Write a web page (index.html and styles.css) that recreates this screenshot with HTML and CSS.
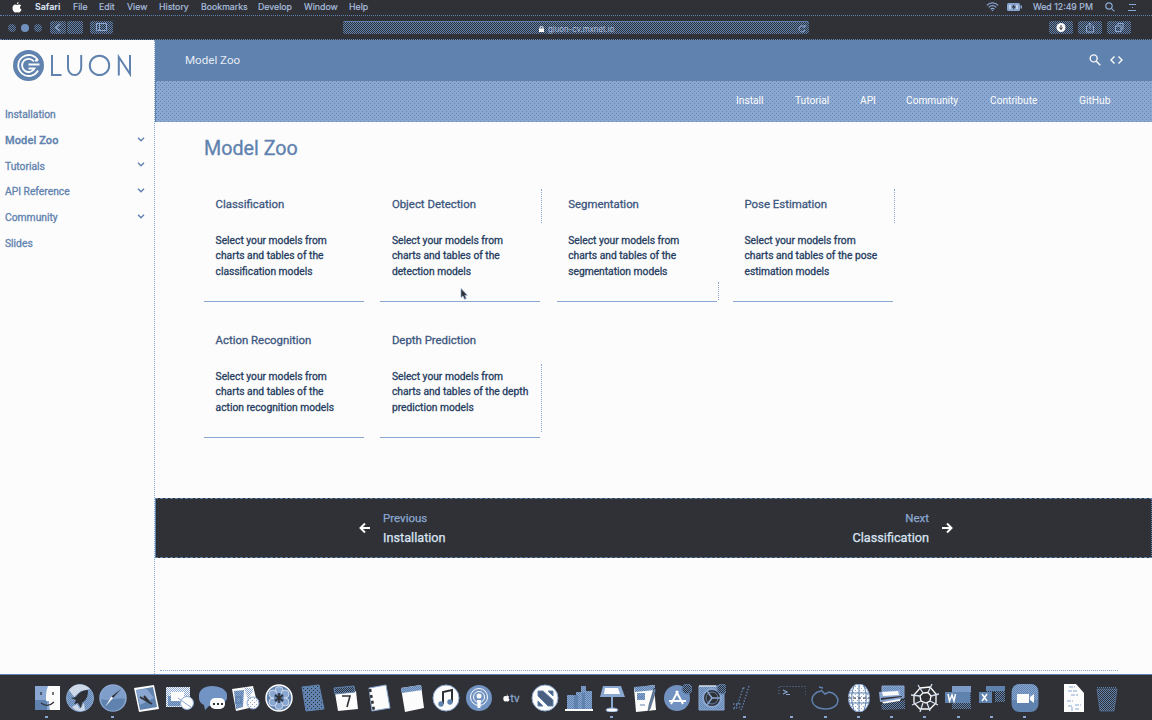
FILE: index.html
```html
<!DOCTYPE html>
<html lang="en">
<head>
<meta charset="utf-8">
<title>Model Zoo</title>
<link rel="stylesheet" href="styles.css">
</head>
<body>
<svg class="defs" width="0" height="0" aria-hidden="true"><defs>
<pattern id="db" width="2" height="2" patternUnits="userSpaceOnUse"><path fill="#303136" d="M0 0h2v2H0z"/><path fill="#5f82ae" d="M0 0h1v1H0zM1 1h1v1H1z"/></pattern>
<pattern id="dk" width="4" height="4" patternUnits="userSpaceOnUse"><path fill="#5f82ae" d="M0 0h4v4H0z"/><path fill="#303136" d="M0 0h1v1H0zM2 2h1v1H2z"/></pattern>
<pattern id="bl" width="2" height="2" patternUnits="userSpaceOnUse"><path fill="#5f82ae" d="M0 0h2v2H0z"/><path fill="#8aa7d1" d="M0 0h1v1H0zM1 1h1v1H1z"/></pattern>
<pattern id="lw" width="2" height="2" patternUnits="userSpaceOnUse"><path fill="#8aa7d1" d="M0 0h2v2H0z"/><path fill="#fcfcfc" d="M0 0h1v1H0zM1 1h1v1H1z"/></pattern>
<pattern id="wl" width="4" height="4" patternUnits="userSpaceOnUse"><path fill="#fcfcfc" d="M0 0h4v4H0z"/><path fill="#8aa7d1" d="M0 0h1v1H0zM2 2h1v1H2z"/></pattern>
</defs></svg>
<div class="desktop">
<header class="menubar">
  <svg class="apple" viewBox="0 0 10 11"><path fill="#fcfcfc" d="M6.600 0C6.700 1.200 5.900 2.200 4.800 2.300 4.700 1.200 5.600.2 6.600 0zM5 3c.8 0 1.300-.5 2.300-.4.8 0 1.400.4 1.800 1-1.700 1.100-1.300 3.300.4 4C9 9.200 8 10.600 7 10.600c-.7 0-1-.4-1.900-.4-.8 0-1.200.4-1.900.4C1.800 10.600.5 8.300.5 6.100c0-2.200 1.300-3.500 2.700-3.500C4 2.600 4.500 3 5 3z"/></svg>
  <nav class="menus"><b>Safari</b><span>File</span><span>Edit</span><span>View</span><span>History</span><span>Bookmarks</span><span>Develop</span><span>Window</span><span>Help</span></nav>
  <div class="status">
    <svg width="13" height="10" viewBox="0 0 13 10" fill="none" stroke="#8aa7d1" stroke-width="1.200"><path d="M.8 3.400C4-.1 9-.1 12.200 3.400M2.700 5.300c2.100-2.200 5.500-2.200 7.600 0M4.600 7.200c1.200-1.100 2.600-1.100 3.800 0"/><path fill="#8aa7d1" stroke="none" d="M5.500 8h2l-1 1.500z"/></svg>
    <svg width="15" height="8" viewBox="0 0 15 8"><rect width="13" height="8" rx="1.500" fill="#8aa7d1"/><path fill="#8aa7d1" d="M13.500 2.500H15v3h-1.500z"/><path fill="none" stroke="#fcfcfc" d="M3 2v4M10 2v4"/><path fill="#303136" d="M7.500 1 4.500 4.500h2L6 7l3-3.500H7z"/></svg>
    <time>Wed 12:49 PM</time>
    <svg width="10" height="10" viewBox="0 0 10 10" fill="none" stroke="#8aa7d1" stroke-width="1.200"><circle cx="4" cy="4" r="3.200"/><path d="m6.400 6.400 3 3"/></svg>
    <svg width="9" height="7" viewBox="0 0 9 7" stroke="#8aa7d1"><path d="M1 .5h7M4 3.500h1M0 6.500h8" /></svg>
  </div>
</header>
<div class="toolbar">
  <div class="lights"><i></i><i></i><i></i></div>
  <div class="history"><span class="btn"><svg viewBox="0 0 16 13"><path stroke-width="1.500" d="m10 3-4 3.500 4 3.500"/></svg></span><span class="btn"></span></div>
  <span class="btn panel"><svg viewBox="0 0 23 13"><path d="M6.500 2.500h10v7h-10zM9.500 3v7"/></svg></span>
  <div class="address"><svg width="5" height="6" viewBox="0 0 5 6"><path fill="#fcfcfc" d="M0 2.500h5V6H0z"/><path fill="none" stroke="#fcfcfc" stroke-width=".8" d="M1 3V.8h3V3"/></svg><span>gluon-cv.mxnet.io</span><svg class="reload" viewBox="0 0 8 8"><path d="M6.600 2A3.100 3.100 0 1 0 7 5M4.500 2h2.600V0"/></svg></div>
  <div class="actions">
    <span class="btn"><svg viewBox="0 0 24 13"><circle cx="12" cy="6.500" r="4.500" fill="#fcfcfc" stroke="none"/><path stroke="#303136" d="M12 4v4.500M10.500 6.500 12 8.500l1.500-2"/></svg></span>
    <span class="btn"><svg viewBox="0 0 24 13"><path d="M10 5H8.500v6h7V5H14M12 8V2M10.500 3.500 12 2l1.500 1.500"/></svg></span>
    <span class="btn"><svg viewBox="0 0 24 13"><path d="M8.500 5h5.500v5.500H8.500zM11 5V2.500h5V8h-2"/></svg></span>
  </div>
</div>
<div class="page">
  <aside class="sidebar">
    <a class="logo"><svg width="120" height="32" viewBox="0 0 120 32"><circle cx="15.500" cy="15.500" r="15.500" fill="#5f82ae"/><path fill="none" stroke="#fcfcfc" stroke-width="1.800" d="M25 10.500a10.500 10.500 0 1 0 0 10M25 10.500h-3"/><path fill="none" stroke="#fcfcfc" stroke-width="1.800" d="M21 11.500a6.600 6.600 0 1 0 .5 7h-6M15.500 14.500h11"/><g fill="none" stroke="#5f82ae" stroke-width="2"><path d="M39 5v20h9.500M55 5v12.500a6.600 7.500 0 0 0 13.200 0V5M105.800 25.500V7l11.200 17V5"/><circle cx="86.500" cy="15.400" r="9.700"/></g></svg></a>
    <nav class="toc">
      <a>Installation</a>
      <a class="on">Model Zoo<svg viewBox="0 0 8 5"><path d="m1 .8 3 3 3-3"/></svg></a>
      <a>Tutorials<svg viewBox="0 0 8 5"><path d="m1 .8 3 3 3-3"/></svg></a>
      <a>API Reference<svg viewBox="0 0 8 5"><path d="m1 .8 3 3 3-3"/></svg></a>
      <a>Community<svg viewBox="0 0 8 5"><path d="m1 .8 3 3 3-3"/></svg></a>
      <a>Slides</a>
    </nav>
  </aside>
  <main class="content">
    <div class="titlebar"><span>Model Zoo</span>
      <div class="tools"><svg width="12" height="12" viewBox="0 0 12 12" fill="none" stroke="#fcfcfc" stroke-width="1.400"><circle cx="4.700" cy="4.400" r="3.500"/><path d="m7.300 7.300 4 4"/></svg><svg width="13" height="8" viewBox="0 0 13 8" fill="none" stroke="#fcfcfc" stroke-width="1.400"><path d="M4.500.5 1 4l3.500 3.500M8.500.5 12 4 8.500 7.500"/></svg></div></div>
    <nav class="sections"><a>Install</a><a>Tutorial</a><a>API</a><a>Community</a><a>Contribute</a><a>GitHub</a></nav>
    <article>
      <h1>Model Zoo</h1>
      <div class="cards">
        <section><h2>Classification</h2><p>Select your models from<br>charts and tables of the<br>classification models</p></section>
        <section class="upper"><h2>Object Detection</h2><p>Select your models from<br>charts and tables of the<br>detection models</p><svg class="cursor" viewBox="0 0 8 12"><path fill="#303136" stroke="#8aa7d1" stroke-width=".6" d="M1 .5v9l2-1.700 1.600 3.500 1.600-.8-1.500-3.200h2.600z"/></svg></section>
        <section class="lower"><h2>Segmentation</h2><p>Select your models from<br>charts and tables of the<br>segmentation models</p></section>
        <section class="upper"><h2>Pose Estimation</h2><p>Select your models from<br>charts and tables of the pose<br>estimation models</p></section>
        <section class="plain"><h2>Action Recognition</h2><p>Select your models from<br>charts and tables of the<br>action recognition models</p></section>
        <section class="tall"><h2>Depth Prediction</h2><p>Select your models from<br>charts and tables of the depth<br>prediction models</p></section>
      </div>
    </article>
    <footer class="pager">
      <a class="prev"><svg viewBox="0 0 12 12"><path d="M11 6H2M6 1.500 1.500 6 6 10.500"/></svg><span><small>Previous</small>Installation</span></a>
      <a class="next"><span><small>Next</small>Classification</span><svg viewBox="0 0 12 12"><path d="M1 6h9M6 1.500 10.500 6 6 10.500"/></svg></a>
    </footer>
    <div class="edge"></div>
  </main>
</div>
<div class="dock">
  <span class="run"><svg viewBox="0 0 28 28"><path fill="#8aa7d1" d="M2 2h25v24H2z"/><path fill="#5f82ae" d="M2 16h12v10H2z"/><path fill="#fcfcfc" d="M15 2h12v24H17c-1-4-1-6-1-9h-3c0-6 0-10 2-15z"/><path fill="none" stroke="#303136" stroke-width="1.300" d="M8 8v3M20 8v3M8 19c4 3 9 3 13-1"/></svg></span>
  <span><svg viewBox="0 0 28 28"><circle cx="14" cy="14" r="13.500" fill="url(#bl)" stroke="#8aa7d1"/><path fill="#fcfcfc" d="M3 6c6-8 16-6 21-1l-9 2-7 6zM6 23l5-3 3 5 4-6 1 7c-5 2-10 1-13-3z" opacity=".65"/><path fill="#303136" d="M22 6c-7 0-10 4-12 7l-5 1 5 2-2 4 4-1 3 5 1-5c4-3 6-6 6-13z"/></svg></span>
  <span class="run"><svg viewBox="0 0 28 28"><circle cx="14" cy="14" r="13" fill="#7f9ec9" stroke="#8aa7d1" stroke-width="1.500"/><path fill="#5f82ae" d="M2 15c8 3 16-2 24 0-1 15-23 16-24 0z"/><path fill="#303136" d="m22 5-8 9-1.500-1.500z"/><path fill="#fcfcfc" d="m6 23 6.500-10.500L14 14z"/></svg></span>
  <span><svg viewBox="0 0 28 28"><path fill="#fcfcfc" d="m2 4 20-3 5 24-20 3z"/><path fill="#5f82ae" d="m4 6 17-3 4 20-17 3z"/><path fill="#8aa7d1" d="m4 6 11-1 7 9-14 7z"/><path fill="none" stroke="#303136" stroke-width="2" d="m8 13 12 7M12 12l5 6"/></svg></span>
  <span><svg viewBox="0 0 28 28"><path fill="url(#lw)" d="M0 3h24v20H0z"/><path fill="url(#bl)" d="M2 12h12v10H2z"/><path fill="#fcfcfc" d="M5 8h13v9H5z"/><circle cx="21" cy="19" r="6.500" fill="#fcfcfc" stroke="#8aa7d1"/><path stroke="#8aa7d1" d="m12 14 14 10"/></svg></span>
  <span><svg viewBox="0 0 28 28"><path fill="#7294c4" d="M13 2C-3 2-3 18 5 21l1 5 4-4c25 1 23-20 3-20z"/><rect x="11" y="14" width="15" height="11" rx="5" fill="#fcfcfc"/><path fill="#303136" d="M14 19h2v2h-2zM18 19h2v2h-2zM22 19h2v2h-2z"/></svg></span>
  <span><svg viewBox="0 0 28 28"><path fill="#fcfcfc" d="m0 5 21-3 5 20-22 5z"/><path fill="url(#bl)" d="m2 7 10-1-1 17-7 2z"/><path fill="url(#lw)" d="m12 3 10 2-6 11z"/><circle cx="21" cy="19" r="6" fill="url(#wl)" stroke="#8aa7d1"/><path fill="none" stroke="#5f82ae" stroke-width="1.500" d="M4 13h5v6H4z"/></svg></span>
  <span><svg viewBox="0 0 28 28"><circle cx="14" cy="14" r="13" fill="#5f82ae" stroke="#fcfcfc" stroke-width="1.500"/><g fill="#8aa7d1" stroke="#fcfcfc" stroke-width=".6"><circle cx="14" cy="6.500" r="4"/><circle cx="20" cy="10" r="4"/><circle cx="20" cy="18" r="4"/><circle cx="14" cy="21.500" r="4"/><circle cx="8" cy="18" r="4"/><circle cx="8" cy="10" r="4"/></g><circle cx="14" cy="14" r="5" fill="#5f82ae"/><path stroke="#303136" stroke-width="1.600" d="m10 11 8 6m0-6-8 6m4-8v10"/></svg></span>
  <span><svg viewBox="0 0 28 28"><path fill="url(#dk)" stroke="#5f82ae" d="m3 3 17-2 5 24-18 2z"/></svg></span>
  <span><svg viewBox="0 0 28 28"><path fill="#fcfcfc" d="m3 9 21-2 2 18-20 2z"/><path fill="url(#db)" stroke="#5f82ae" d="m2 4 20-2 1 6L3 10z"/><path fill="none" stroke="#303136" stroke-width="1.600" d="M10 12h8l-3 11"/></svg></span>
  <span><svg viewBox="0 0 28 28"><path fill="#fcfcfc" stroke="#8aa7d1" d="m4 4 17-3 4 23-18 3z"/><path stroke="#303136" stroke-width="2.500" stroke-dasharray="3 3" d="m5 5 4 22"/></svg></span>
  <span><svg viewBox="0 0 28 28"><path fill="#fcfcfc" d="m3 4 20-3 3 23-19 4z"/><path fill="url(#bl)" d="m3 4 20-3 1 5L4 9z"/></svg></span>
  <span><svg viewBox="0 0 28 28"><circle cx="14" cy="14" r="13" fill="#fcfcfc" stroke="#8aa7d1"/><path fill="none" stroke="#303136" stroke-width="2" d="M11 20V8l9-2v12"/><circle cx="9" cy="20" r="2.700" fill="#5f82ae"/><circle cx="18" cy="18" r="2.700" fill="#5f82ae"/></svg></span>
  <span><svg viewBox="0 0 28 28"><circle cx="14" cy="14" r="13" fill="#7093c2"/><g fill="none" stroke="#fcfcfc"><circle cx="14" cy="13" r="8.500"/><circle cx="14" cy="13" r="5.500"/></g><circle cx="14" cy="12" r="2.500" fill="#fcfcfc"/><path fill="#fcfcfc" d="M12 16h4l-.6 8h-2.800z"/></svg></span>
  <span class="tv"><svg viewBox="0 0 10 11"><path fill="#fcfcfc" d="M6 0 5 2.300 7 2zM5 3c2-1 3-.4 4 .6-1.700 1.100-1.300 3.300.4 4-1.500 3.500-2.500 3-4.400 2.600C1 11.500.5 8.300.5 6.100.5 3 2.500 2 5 3z"/></svg>tv</span>
  <span><svg viewBox="0 0 28 28"><circle cx="14" cy="14" r="13" fill="#fcfcfc" stroke="#8aa7d1"/><path fill="#4a5f80" stroke="#5f82ae" d="M7 7h5l10 9v6h-5L7 12zM17 7h5v5zM7 17v5h5z"/></svg></span>
  <span><svg viewBox="0 0 28 28"><path fill="url(#bl)" d="M2 25V11h7v3h2V8h5V2h5v5h6v18z"/><path fill="#5f82ae" d="M9 11h4v14H9zM17 9h3v16h-3z"/><path fill="#fcfcfc" d="M0 25h28v2H0z"/></svg></span>
  <span class="run"><svg viewBox="0 0 28 28"><path fill="#8aa7d1" d="M5 2h18l4 11H2z"/><path fill="#fcfcfc" d="M7 4h13l2 6H6z"/><path stroke="#8aa7d1" stroke-width="2" d="M14 13v13"/><ellipse cx="14" cy="26" rx="6" ry="2" fill="#fcfcfc" stroke="#8aa7d1"/></svg></span>
  <span><svg viewBox="0 0 28 28"><path fill="#fcfcfc" d="m3 4 20-3 2 25-20 2z"/><path fill="url(#bl)" d="m3 3 21-2v5L4 8zM6 9h8v7H6z"/><path fill="none" stroke="#5f82ae" d="M7 13h5M9 21h5"/><path fill="#5f82ae" stroke="#303136" stroke-width=".5" d="m23 4 2 2-6 19-2 2 1-6z"/></svg></span>
  <span><svg viewBox="0 0 28 28"><circle cx="13" cy="14" r="13" fill="#7192c0"/><path fill="none" stroke="#fcfcfc" stroke-width="2" d="m14 7-7 13M12 7l7 13M5 17h17"/><circle cx="23" cy="5" r="5" fill="url(#db)" stroke="#5f82ae"/></svg></span>
  <span><svg viewBox="0 0 28 28"><path fill="url(#bl)" stroke="#8aa7d1" d="M1 2h25v24H1z"/><path stroke="#fcfcfc" d="M1 2h17"/><circle cx="14" cy="14" r="9" fill="#303136" stroke="#8aa7d1" stroke-width="2"/><circle cx="14" cy="14" r="6" fill="none" stroke="#5f82ae"/><path stroke="#8aa7d1" stroke-width="1.500" d="M14 14 9 7M14 14h9M14 14l-5 7"/><circle cx="24" cy="5" r="5" fill="url(#db)" stroke="#5f82ae"/></svg></span>
  <span class="run"><svg viewBox="0 0 28 28"><path fill="none" stroke="#5f82ae" stroke-width="1.300" stroke-dasharray="1.500 1.500" d="m12 4-5 16-5 5 7-2M18 2l-6 19-2 5M2 20h8M12 4h2"/></svg></span>
  <span class="run gap"><svg viewBox="0 0 28 28"><path fill="none" stroke="#5f82ae" stroke-dasharray="1 2" d="M1 10V2.500h27V11"/><path fill="none" stroke="#8aa7d1" stroke-width="1.200" d="m5 6 4 2-4 2M8 10.500h4"/></svg></span>
  <span class="run"><svg viewBox="0 0 28 28"><path fill="none" stroke="#5f82ae" stroke-width="1.500" d="M10 7C-3 9-2 25 14 25c17 0 16-15 4-17l-4 2-4-4M8 3l4 1"/></svg></span>
  <span class="run"><svg viewBox="0 0 28 28"><ellipse cx="14" cy="14" rx="10.500" ry="14" fill="url(#wl)" stroke="#8aa7d1"/><path fill="none" stroke="#5f82ae" d="M14 0v28M4 9h20M4 19h20M9 2c-3 8-3 16 0 24M19 2c3 8 3 16 0 24"/><path stroke="#303136" stroke-dasharray="3 2" d="M3 14h22"/></svg></span>
  <span class="run"><svg viewBox="0 0 28 28"><path fill="url(#bl)" stroke="#8aa7d1" d="M4 2h22v12H4z"/><path fill="#8aa7d1" d="m1 8 21-2 1 10-21 2z"/><path fill="#fcfcfc" d="m4 8 16-1 1 4-16 1zM4 18l18-3v4l-14 3z"/><path fill="url(#db)" d="m3 20 24-4v9L4 26z"/><path fill="#303136" d="m3 14 21-2v1L3 16z"/></svg></span>
  <span class="run"><svg viewBox="0 0 28 28"><g fill="none" stroke="#fcfcfc" stroke-width="1.300"><path d="m9 4 10-1 6 7v9l-6 6H9l-6-6v-8zM12 9l5-.5 3 3.500-1 5-4 2-5-2-1-5z"/><path stroke="#d5e0f0" d="m7 1 5 8M21 0l-4 8.500M0 11l9 1M28 10l-8 2M1 21l9-4M27 21l-8-4M9 28l3-9M19 27l-3-8"/></g></svg></span>
  <span class="run"><svg viewBox="0 0 28 28"><path fill="url(#db)" d="M8 2h19v23H8z"/><path fill="#7c9bc7" d="M8 2h19v6H8z"/><path fill="#5f82ae" d="M1 8h25v11H1z"/><path fill="none" stroke="#fcfcfc" stroke-width="1.500" d="m4 10 1.500 7L8 11l2 6 1.500-7"/></svg></span>
  <span class="run"><svg viewBox="0 0 28 28"><path fill="url(#db)" d="M8 3h19v15H8z"/><path fill="#5f82ae" d="M8 2h19v5H8zM1 8h13v11H1z"/><path fill="none" stroke="#fcfcfc" stroke-width="1.500" d="m4 10 5 7m0-7-5 7"/><path fill="#303136" d="M14 8h3v11h-3z"/></svg></span>
  <span class="run"><svg viewBox="0 0 28 28"><rect x=".5" width="27" height="28" rx="8" fill="#5f82ae"/><path fill="url(#bl)" d="M1 16V8q0-8 8-8h10q8 0 8 8v8z"/><path fill="#fcfcfc" d="M6 10h12v9H6zM19 13l4-3v9l-4-3z"/></svg></span>
  <span class="file"><svg viewBox="0 0 28 28"><path fill="#fcfcfc" d="M4 0h12l8 9v19H4z"/><path fill="none" stroke="#8aa7d1" stroke-dasharray="4 1" d="M9 3h6M8 7h9M11 11h7M7 17h6M8 22h4v5M15 21h6M15 25h5"/></svg></span>
  <span><svg viewBox="0 0 28 28"><path fill="url(#db)" stroke="#5f82ae" stroke-width=".6" d="M4 5h20l-3 22H7z"/><path fill="none" stroke="#5f82ae" stroke-dasharray="1 1" d="M4 3.500h20"/></svg></span>
</div>
</div>
</body>
</html>
```
FILE: styles.css
```css
:root{--dark:#303136;--blue:#5f82ae;--light:#8aa7d1;--white:#fcfcfc;--dither:conic-gradient(at 1px 1px,transparent 75%,var(--blue) 0) 0 0/2px 2px,conic-gradient(at 1px 1px,transparent 75%,var(--blue) 0) 1px 1px/2px 2px,var(--dark)}
*{box-sizing:border-box}
body{margin:0;background:var(--white);font-family:Roboto,"Liberation Sans",sans-serif}
svg{display:block;flex:none}
.defs{position:absolute}
.desktop{width:1152px;height:720px;display:flex;flex-direction:column;overflow:hidden}
.menubar{height:16px;background:var(--dark);display:flex;align-items:center;padding:0 15px 1px 12px;font:8.800px/14px Inter,sans-serif;color:#a8bddd;border-bottom:1px dotted var(--blue)}
.apple{width:10px;height:11px;margin-right:13px}
.menus{display:flex;flex:1;-webkit-text-stroke:.2px}
.menus>*{white-space:nowrap;width:38px}
.menus b{color:#d6e0f0;-webkit-text-stroke:0}
.menus :nth-child(2){width:26px}
.menus :nth-child(3){width:28px}
.menus :nth-child(4){width:32px}
.menus :nth-child(5){width:42px}
.menus :nth-child(6){width:57px}
.menus :nth-child(7){width:46px}
.menus :nth-child(8){width:45px}
.status{display:flex;align-items:center;gap:9px}
.status svg:first-child{margin-right:-1px}
.status time{width:61px;white-space:nowrap;-webkit-text-stroke:.2px}
.status time{margin-left:2px;margin-right:-1px}
.status svg:nth-last-child(2){margin-left:3px}
.status svg:last-child{margin-left:4px}
.toolbar{height:24px;flex:none;background:var(--dark);display:flex;align-items:center;padding:0 21px 0 8px;border-bottom:1px dotted var(--blue)}
.lights{display:flex;gap:5px;width:42px}
.lights i{width:8px;height:8px;border-radius:50%;background:var(--dither)}
.lights i:nth-child(2){background:#7090bd}
.btn{display:block;height:13px;border-radius:2px;background:var(--dither);overflow:hidden}
.btn svg{width:100%;height:13px;fill:none;stroke:var(--light)}
.history{display:flex;gap:1px;width:40px}
.history .btn{width:16px}
.panel{width:23px}
.address{margin-left:230px;width:466px;height:13px;border-top:1px solid var(--blue);border-radius:2px;background:var(--dither);display:flex;align-items:center;gap:4px;color:#a8bddd;font:7.800px/11px Inter,sans-serif;padding:2px 3px 0 196px}
.address span{white-space:nowrap}
.reload{width:8px;height:8px;fill:none;stroke:var(--light);margin-left:auto}
.actions{margin-left:auto;display:flex;gap:5px}
.actions .btn{width:24px}
.page{height:634px;flex:none;display:flex}
.sidebar{width:155px;flex:none;border-right:1px dotted var(--light);padding:10px 9.500px 0 5px;color:var(--blue)}
.logo{display:block;padding-left:8px;height:52px}
.toc a{display:flex;align-items:center;justify-content:space-between;height:25.700px;font-size:10.300px;-webkit-text-stroke:.3px}
.toc .on{font-weight:500;font-size:11px;letter-spacing:.01em}
.toc svg{width:8px;height:5px;fill:none;stroke:var(--blue);stroke-width:1.400;margin-bottom:3px}
.content{flex:1;display:flex;flex-direction:column}
.titlebar{height:41px;background:var(--blue);display:flex;align-items:center;justify-content:space-between;padding:0 29px 2px 30px;color:#e5ebf5;font-size:11.600px}
.tools{display:flex;align-items:center;gap:9px}
.sections{height:41px;display:flex;align-items:center;padding:0 0 2px 580px;color:var(--white);font-size:10.200px;background:conic-gradient(at 1px 1px,transparent 75%,var(--blue) 0) 0 0/4px 4px,conic-gradient(at 1px 1px,transparent 75%,var(--blue) 0) 2px 2px/4px 4px,var(--light);border-left:1px solid var(--blue)}
.sections a{white-space:nowrap;width:59px}
.sections a:nth-child(2){width:65px}
.sections a:nth-child(3){width:46px}
.sections a:nth-child(4){width:84px}
.sections a:nth-child(5){width:89px}
article{height:376px;padding:13px 49px 0}
h1{margin:0;font-weight:400;font-size:19.700px;line-height:27px;color:var(--blue);-webkit-text-stroke:.3px;height:43px}
.cards{display:grid;grid-template-columns:repeat(4,160px);gap:12px 16.300px}
.cards section{position:relative;height:124px;padding:19px 0 0 11.600px;border-bottom:1px solid var(--light);white-space:nowrap}
.cards section::after{content:"";position:absolute;right:-2px;top:11px;height:0;border-right:1px dotted var(--light)}
.cards .upper::after{height:34px}
.cards .lower::after{top:104px;height:18px}
.cards .tall::after{top:50px;height:68px}
h2{margin:0 0 22px;font-weight:400;font-size:11.400px;line-height:14px;color:#3c577f;-webkit-text-stroke:.3px}
p{margin:0;font-size:10.250px;line-height:15.400px;color:#263d61;-webkit-text-stroke:.3px}
.cursor{position:absolute;left:80px;top:110px;width:8px;height:12px}
.pager{height:60px;background:var(--dark);border:1px dashed var(--blue);border-left-style:solid;border-right-style:dotted;display:flex;justify-content:space-between;padding:0 198px 0 203px;color:#dbe5f4;font-size:12.700px;line-height:19px;-webkit-text-stroke:.25px}
.pager a{display:flex;align-items:center;gap:12px}
.pager small{display:block;font-size:11.500px;color:var(--light)}
.pager svg{width:12px;height:12px;fill:none;stroke:var(--white);stroke-width:2}
.next{text-align:right}
.edge{margin:112px 34px 0 5px;border-top:1px dotted var(--light)}
.dock{height:46px;background:var(--dark);border-top:1px solid var(--blue);display:flex;padding:9px 0 0 30px}
.dock>span{width:33px;flex:none;height:36px;display:flex;flex-direction:column;align-items:center}
.dock>span:nth-child(4n){width:34px}
.dock svg{width:28px;height:28px}
.dock .run::after{content:"";width:3px;height:2px;background:var(--light);margin-top:4px}
.dock .gap{margin-left:14px}
.dock .file{margin-left:16px}
.dock .tv{flex-direction:row;justify-content:center;align-items:flex-start;padding-top:8px;color:var(--light);font:10px/13px Inter,sans-serif;-webkit-text-stroke:.3px}
.dock .tv svg{width:7px;height:8px;margin-top:2px}
```
